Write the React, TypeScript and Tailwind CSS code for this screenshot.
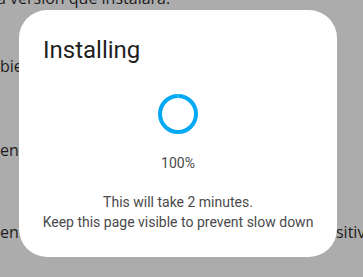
import React from 'react'

function Spinner() {
  return (
    <svg width="40" height="40" viewBox="0 0 40 40" className="block">
      <circle cx="20" cy="20" r="18" fill="none" stroke="#03a9f4" strokeWidth="4" />
      <line x1="20" y1="0" x2="20" y2="4" stroke="#7fd3f9" strokeWidth="0.8" />
    </svg>
  )
}

export default function App() {
  return (
    <div className="relative h-[277px] w-[363px] overflow-hidden bg-[#acacac] font-['Open_Sans',sans-serif] text-[16px] leading-6 text-[#1c1c1c]">
      {/* page behind the overlay */}
      <div className="-mt-[14px] -ml-[3px] whitespace-nowrap">a versión que instalará.</div>
      <div className="mt-[44px] whitespace-nowrap">bien</div>
      <div className="mt-[60px] whitespace-nowrap">entonces</div>
      <div className="mt-[58px] flex justify-between whitespace-nowrap">
        <span>entación</span>
        <span className="-mr-[12px]">positivo</span>
      </div>

      {/* dialog */}
      <div className="absolute left-[19px] top-[10px] flex w-[318px] flex-col rounded-[28px] bg-white px-6 pt-6 pb-[25px] font-['Roboto',sans-serif]">
        <h2 className="text-[24px] leading-8 font-normal text-[#1f1f1f]">Installing</h2>
        <div className="mt-[28px] flex justify-center">
          <Spinner />
        </div>
        <div className="mt-[19px] text-center text-[14px] leading-5 text-[#4a4a4a]">100%</div>
        <div className="-mx-3 mt-[19px] text-center text-[14px] leading-5 whitespace-nowrap text-[#4a4a4a]">
          <p>This will take 2 minutes.</p>
          <p>Keep this page visible to prevent slow down</p>
        </div>
      </div>
    </div>
  )
}
